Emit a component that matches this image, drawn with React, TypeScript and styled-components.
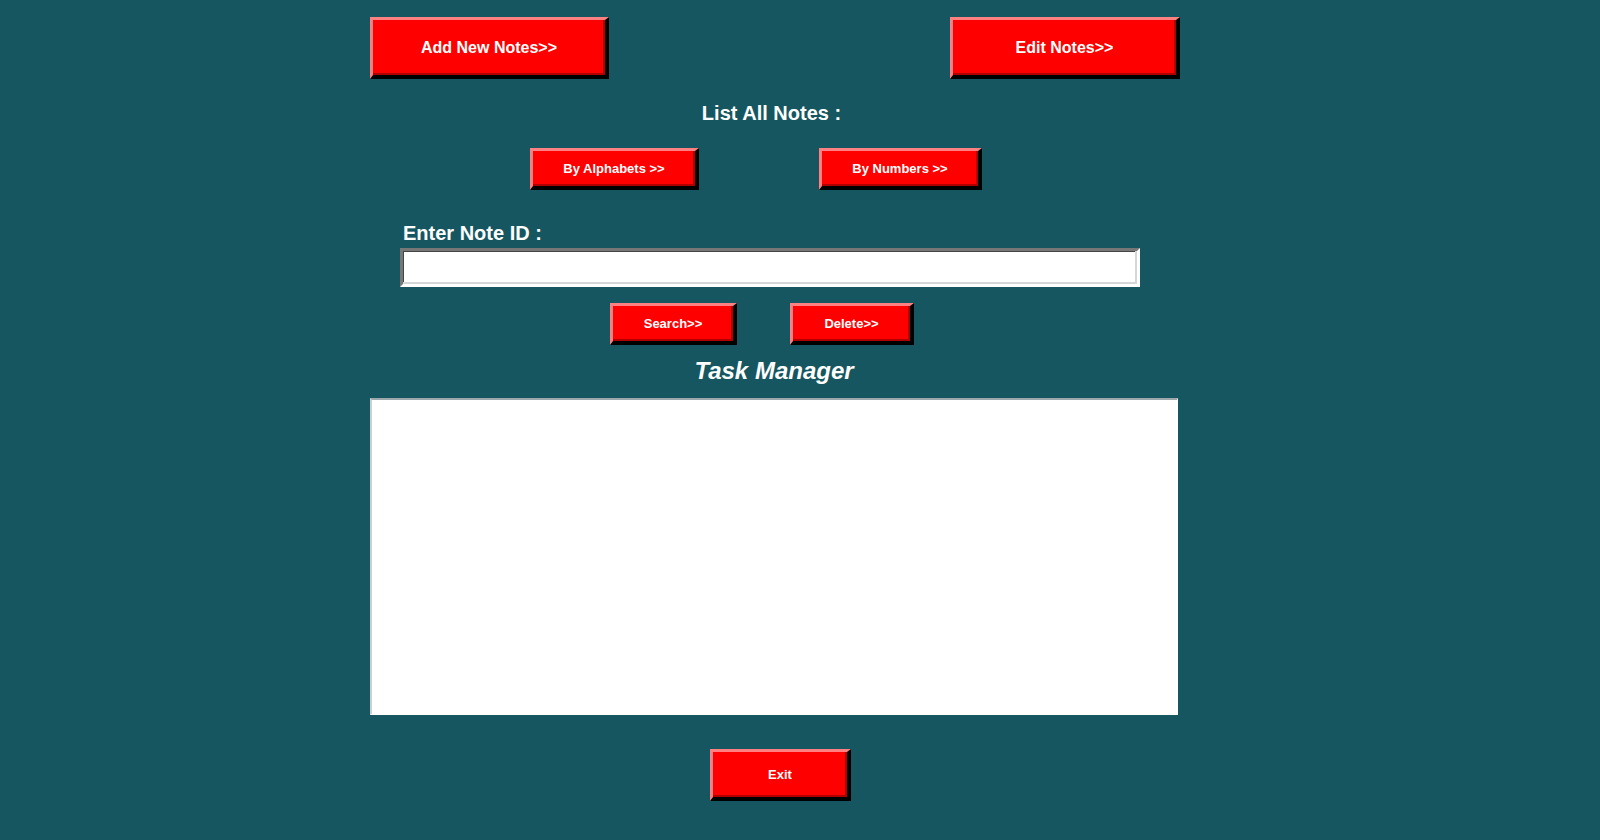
import React, { useState } from 'react';
import styled, { createGlobalStyle } from 'styled-components';

// --- Estilo global ---
const GlobalStyle = createGlobalStyle`
  html, body {
    margin: 0;
    padding: 0;
    background-color: #155661;
  }
  body {
    font-family: 'Liberation Sans', Arial, sans-serif;
    color: #fff;
  }
`;

// --- Layout ---
const Page = styled.div`
  min-height: 840px;
  padding: 17px 0 0 370px;
  box-sizing: border-box;
`;

const Panel = styled.div`
  width: 810px;
  display: flex;
  flex-direction: column;
`;

const Row = styled.div<{ $pad?: number; $gap?: number; $top?: number; $between?: boolean }>`
  display: flex;
  align-items: flex-start;
  justify-content: ${(p) => (p.$between ? 'space-between' : 'flex-start')};
  padding-left: ${(p) => p.$pad ?? 0}px;
  gap: ${(p) => p.$gap ?? 0}px;
  margin-top: ${(p) => p.$top ?? 0}px;
`;

// botão vermelho em relevo (estilo windows antigo)
const RedButton = styled.button<{ $w: number; $h: number; $size?: number }>`
  width: ${(p) => p.$w}px;
  height: ${(p) => p.$h}px;
  box-sizing: border-box;
  background-color: #ff0000;
  color: #fff;
  font-family: 'Liberation Sans', Arial, sans-serif;
  font-weight: bold;
  font-size: ${(p) => p.$size ?? 13}px;
  border-style: solid;
  border-width: 3px 4px 4px 3px;
  border-color: #ff8080 #000 #000 #ff8080;
  box-shadow: inset -2px -2px 0 #b00000;
  padding: 0;
  cursor: pointer;
`;

const Heading = styled.h2<{ $top?: number }>`
  margin: ${(p) => p.$top ?? 0}px 0 0;
  font-size: 20px;
  line-height: 23px;
  font-weight: bold;
  text-align: center;
  padding-right: 7px;
`;

const Label = styled.label`
  display: block;
  margin: 32px 0 0 33px;
  font-size: 20px;
  line-height: 23px;
  font-weight: bold;
`;

const IdInput = styled.input`
  display: block;
  width: 740px;
  height: 39px;
  box-sizing: border-box;
  margin: 3px 0 0 30px;
  border-style: solid;
  border-width: 3px;
  border-color: #777 #fff #fff #777;
  box-shadow: inset -2px -2px 0 #d6d6d6, inset 1px 1px 0 #444;
  background: #fff;
  font-family: 'Liberation Sans', Arial, sans-serif;
  font-size: 16px;
  padding: 0 6px;
  outline: none;
`;

const Title = styled.h1`
  margin: 12px 0 0;
  font-size: 24px;
  line-height: 28px;
  font-weight: bold;
  font-style: italic;
  text-align: center;
  padding-right: 2px;
`;

const Output = styled.textarea`
  display: block;
  width: 808px;
  height: 317px;
  box-sizing: border-box;
  margin-top: 13px;
  border-style: solid;
  border-width: 2px 1px 1px 2px;
  border-color: #9ca8ac #fff #fff #c8d0d2;
  background: #fff;
  resize: none;
  outline: none;
  font-family: 'Liberation Mono', monospace;
  font-size: 14px;
`;

// --- Componente ---
const App: React.FC = () => {
  const [noteId, setNoteId] = useState('');

  return (
    <>
      <GlobalStyle />
      <Page>
        <Panel>
          <Row $between>
            <RedButton $w={239} $h={62} $size={16}>Add New Notes&gt;&gt;</RedButton>
            <RedButton $w={230} $h={62} $size={16}>Edit Notes&gt;&gt;</RedButton>
          </Row>

          <Heading $top={23}>List All Notes :</Heading>

          <Row $pad={160} $gap={120} $top={23}>
            <RedButton $w={169} $h={42}>By Alphabets &gt;&gt;</RedButton>
            <RedButton $w={163} $h={42}>By Numbers &gt;&gt;</RedButton>
          </Row>

          <Label htmlFor="note-id">Enter Note ID :</Label>
          <IdInput id="note-id" value={noteId} onChange={(e) => setNoteId(e.target.value)} />

          <Row $pad={240} $gap={53} $top={16}>
            <RedButton $w={127} $h={42}>Search&gt;&gt;</RedButton>
            <RedButton $w={124} $h={42}>Delete&gt;&gt;</RedButton>
          </Row>

          <Title>Task Manager</Title>
          <Output readOnly />

          <Row $pad={340} $top={34}>
            <RedButton $w={141} $h={52}>Exit</RedButton>
          </Row>
        </Panel>
      </Page>
    </>
  );
};

export default App;
